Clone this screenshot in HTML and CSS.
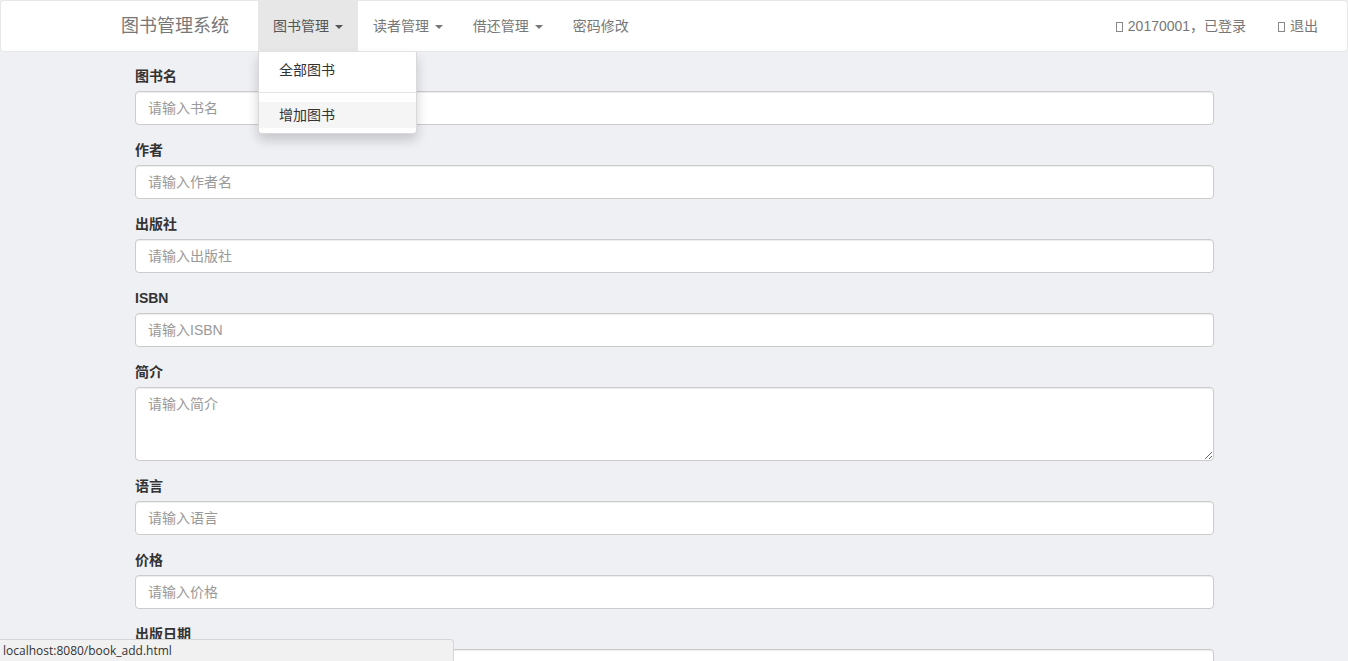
FILE: index.html
```html
<!DOCTYPE html>
<html lang="zh">
<head>
<meta charset="utf-8">
<title>增加图书</title>
<link rel="stylesheet" href="styles.css">
</head>
<body>
<nav class="navbar">
  <div class="nav-left">
    <span class="brand">图书管理系统</span>
    <ul class="nav">
      <li class="nav-item active">
        <span class="nav-link">图书管理 <span class="caret"></span></span>
        <ul class="dropdown">
          <li class="dd-item">全部图书</li>
          <li class="dd-divider"></li>
          <li class="dd-item hover">增加图书</li>
        </ul>
      </li>
      <li class="nav-item"><span class="nav-link">读者管理 <span class="caret"></span></span></li>
      <li class="nav-item"><span class="nav-link">借还管理 <span class="caret"></span></span></li>
      <li class="nav-item"><span class="nav-link">密码修改</span></li>
    </ul>
  </div>
  <ul class="nav nav-right">
    <li class="nav-item"><span class="nav-link"><span class="gi"></span> 20170001，已登录</span></li>
    <li class="nav-item"><span class="nav-link"><span class="gi"></span> 退出</span></li>
  </ul>
</nav>

<form class="book-form">
  <div class="form-group">
    <label>图书名</label>
    <input class="form-control" type="text" placeholder="请输入书名">
  </div>
  <div class="form-group">
    <label>作者</label>
    <input class="form-control" type="text" placeholder="请输入作者名">
  </div>
  <div class="form-group">
    <label>出版社</label>
    <input class="form-control" type="text" placeholder="请输入出版社">
  </div>
  <div class="form-group">
    <label>ISBN</label>
    <input class="form-control" type="text" placeholder="请输入ISBN">
  </div>
  <div class="form-group">
    <label>简介</label>
    <textarea class="form-control area" rows="3" placeholder="请输入简介"></textarea>
  </div>
  <div class="form-group">
    <label>语言</label>
    <input class="form-control" type="text" placeholder="请输入语言">
  </div>
  <div class="form-group">
    <label>价格</label>
    <input class="form-control" type="text" placeholder="请输入价格">
  </div>
  <div class="form-group">
    <label>出版日期</label>
    <input class="form-control" type="text" placeholder="请输入出版日期">
  </div>
</form>

<div class="status-bubble">localhost:8080/book_add.html</div>
</body>
</html>
```

FILE: styles.css
```css
* { box-sizing: border-box; }
html, body {
  margin: 0;
  padding: 0;
  height: 100%;
  overflow: hidden;
}
body {
  background: #eff0f4;
  font-family: "Liberation Sans", Arial, "Noto Sans CJK SC", sans-serif;
  font-size: 14px;
  line-height: 20px;
  color: #333;
}
ul { list-style: none; margin: 0; padding: 0; }

.navbar {
  display: flex;
  justify-content: space-between;
  height: 52px;
  background: #fff;
  border: 1px solid #e7e7e7;
  border-radius: 4px;
  padding: 0 14px 0 105px;
}
.nav-left { display: flex; }
.brand {
  padding: 15px 15px;
  font-size: 18px;
  line-height: 20px;
  color: #777;
  margin-right: 14px;
}
.nav { display: flex; }
.nav-item { position: relative; }
.nav-link {
  display: block;
  padding: 15px 15px;
  color: #777;
  line-height: 20px;
}
.nav-item.active > .nav-link {
  background: #e7e7e7;
  color: #555;
}
.caret {
  display: inline-block;
  width: 0;
  height: 0;
  margin-left: 2px;
  vertical-align: middle;
  border-top: 4px solid;
  border-left: 4px solid transparent;
  border-right: 4px solid transparent;
}
.nav-right .nav-link { padding: 15px 15px 15px 16px; }
.nav-right .nav-item + .nav-item { margin-left: 1px; }
.gi {
  display: inline-block;
  width: 7px;
  height: 10px;
  border: 1px solid #888;
  vertical-align: -1px;
  margin-right: 1px;
}

.dropdown {
  position: absolute;
  top: calc(100% + 1px);
  left: 0;
  z-index: 10;
  width: 159px;
  padding: 5px 0;
  background: #fff;
  border: 1px solid rgba(0,0,0,.15);
  border-top: 0;
  border-radius: 0 0 4px 4px;
  box-shadow: 0 6px 12px rgba(0,0,0,.175);
}
.dd-item {
  padding: 3px 20px;
  line-height: 20px;
  color: #333;
}
.dd-item.hover { background: #f5f5f5; }
.dd-divider {
  height: 1px;
  margin: 9px 0;
  background: #e5e5e5;
}

.book-form {
  padding: 14px 134px 0 135px;
}
.form-group { margin-bottom: 15px; }
.form-group label {
  display: block;
  font-weight: bold;
  margin-bottom: 5px;
  line-height: 20px;
  color: #333;
}
.form-control {
  display: block;
  width: 100%;
  height: 34px;
  padding: 6px 12px;
  font-family: inherit;
  font-size: 14px;
  line-height: 20px;
  color: #555;
  background: #fff;
  border: 1px solid #ccc;
  border-radius: 4px;
  box-shadow: inset 0 1px 1px rgba(0,0,0,.075);
  margin: 0;
}
.form-control::placeholder { color: #999; }
.form-control.area {
  height: 74px;
  resize: vertical;
}

.status-bubble {
  position: fixed;
  left: 0;
  bottom: 0;
  width: 454px;
  height: 22px;
  padding: 2px 3px;
  background: #f1f1f1;
  border: 1px solid #d6d6d6;
  border-left: 0;
  border-bottom: 0;
  border-radius: 0 4px 0 0;
  font-family: "Open Sans", "Liberation Sans", sans-serif;
  font-size: 12px;
  line-height: 17px;
  color: #333;
}
```
